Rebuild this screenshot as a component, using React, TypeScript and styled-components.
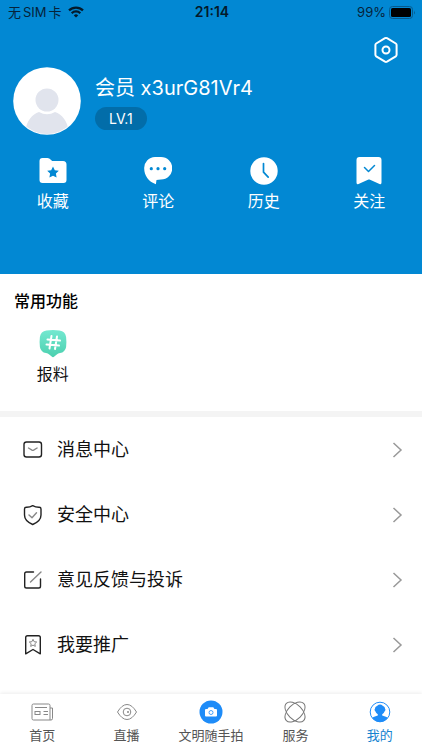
import React from "react";
import styled, { createGlobalStyle } from "styled-components";

const GlobalStyle = createGlobalStyle`
  * { box-sizing: border-box; }
  body { margin: 0; background: #fff; }
  body, button { font-family: Inter, "Noto Sans CJK SC", sans-serif; }
  button { border: 0; padding: 0; margin: 0; background: none; color: inherit; cursor: pointer; }
  svg { display: block; flex: none; }
`;

const Page = styled.div`
  display: flex;
  flex-direction: column;
  min-height: 100vh;
  color: #111;
`;

const Header = styled.header`
  background: #0288d3;
  color: #fff;
  padding-bottom: 61px;
`;

const StatusBar = styled.div`
  display: grid;
  grid-template-columns: 1fr auto 1fr;
  align-items: center;
  height: 24px;
  padding: 0 6px 0 8px;
  color: #06233a;
  font-size: 13px;
  line-height: 24px;
`;

const StatusGroup = styled.div<{ $end?: boolean }>`
  display: flex;
  align-items: center;
  gap: ${(p) => (p.$end ? 3 : 6)}px;
  justify-content: ${(p) => (p.$end ? "flex-end" : "flex-start")};
`;

const Carrier = styled.span`
  display: flex;
  gap: 2px;
`;

const Clock = styled.time`
  color: #041a2b;
  font-size: 14px;
  font-weight: 600;
`;

const Tools = styled.div`
  display: flex;
  justify-content: flex-end;
  height: 43px;
  padding: 12px 22px 0;
`;

const IconButton = styled.button`
  width: 28px;
  height: 28px;
`;

const Profile = styled.section`
  display: flex;
  gap: 14px;
  padding: 0 13px;
`;

const ProfileText = styled.div`
  display: flex;
  flex-direction: column;
  align-items: flex-start;
  gap: 5px;
  padding-top: 7px;
`;

const UserName = styled.h1`
  margin: 0;
  font-size: 20px;
  font-weight: 400;
  line-height: 28px;
`;

const Level = styled.span`
  padding: 0 14px;
  border-radius: 12px;
  background: #026da9;
  font-size: 14px;
  line-height: 23px;
`;

const Shortcuts = styled.nav`
  display: grid;
  grid-template-columns: repeat(4, 1fr);
`;

const HeaderShortcuts = styled(Shortcuts)`
  padding-top: 21px;
`;

const Shortcut = styled.button`
  display: flex;
  flex-direction: column;
  align-items: center;
  gap: 3px;
  font-size: 16px;
  line-height: 24px;
`;

const Common = styled.section`
  padding: 15px 0 25px;
  border-bottom: 6px solid #f4f4f4;
`;

const SectionTitle = styled.h2`
  margin: 0 0 16px 14px;
  font-size: 16px;
  font-weight: 500;
  line-height: 24px;
  color: #000;
`;

const Menu = styled.nav`
  flex: 1;
  padding-bottom: 16px;
`;

const MenuRow = styled.button`
  display: flex;
  align-items: center;
  width: 100%;
  height: 65px;
  padding: 0 18px 0 22px;
  gap: 13px;
  font-size: 18px;
  line-height: 26px;
`;

const MenuLabel = styled.span`
  flex: 1;
  text-align: left;
`;

const TabBar = styled.nav`
  position: sticky;
  bottom: 0;
  display: grid;
  grid-template-columns: repeat(5, 1fr);
  height: 56px;
  background: #fff;
  box-shadow: 0 -1px 4px rgba(0, 0, 0, 0.08);
`;

const Tab = styled.button<{ $active?: boolean }>`
  display: flex;
  flex-direction: column;
  align-items: center;
  gap: 1px;
  padding-top: 6px;
  font-size: 13px;
  line-height: 20px;
  white-space: nowrap;
  color: ${(p) => (p.$active ? "#1683d0" : "#555")};
`;

const WifiIcon = () => (
  <svg width="16" height="12" viewBox="0 0 16 12" fill="none" stroke="#041a2b" strokeWidth="2.2">
    <path d="M1 4.4a10 10 0 0 1 14 0M3.7 7.2a6.2 6.2 0 0 1 8.6 0" />
    <path d="M8 11.6 5.8 9.4a3.1 3.1 0 0 1 4.4 0z" fill="#041a2b" stroke="none" />
  </svg>
);

const BatteryIcon = () => (
  <svg width="27" height="13" viewBox="0 0 27 13">
    <rect x="0.5" y="0.5" width="23" height="12" rx="3" fill="none" stroke="#065a8c" />
    <rect x="2" y="2" width="20" height="9" rx="1.6" fill="#000" />
    <path d="M25 4.5q1.6 2 0 4z" fill="#065a8c" />
  </svg>
);

const SettingsIcon = () => (
  <svg width="28" height="28" viewBox="0 0 28 28" fill="none" stroke="#fff" strokeWidth="2" strokeLinejoin="round">
    <path d="M13 2.2q1-.5 2 0l8.800 5.300q.8.5.8 1.500v9.800q0 1-.8 1.500L15 25.700q-1 .5-2 0l-8.800-5.400q-.8-.5-.8-1.500V9q0-1 .8-1.500z" />
    <circle cx="14" cy="14" r="3.500" />
  </svg>
);

const Avatar = () => (
  <svg width="68" height="68" viewBox="0 0 68 68" role="img" aria-label="头像">
    <defs>
      <clipPath id="avatar"><circle cx="34" cy="34" r="33" /></clipPath>
    </defs>
    <circle cx="34" cy="34" r="33.800" fill="#fff" />
    <g clipPath="url(#avatar)" fill="#e1e4ed">
      <path d="M12 68v-4c2-10 7-17 14-19q8 4.500 16 0c7 2 12 9 14 19v4z" />
      <circle cx="34" cy="33" r="11.500" />
    </g>
  </svg>
);

const FolderIcon = () => (
  <svg width="28" height="30" viewBox="0 0 28 30">
    <path d="M.5 5q0-3 3-3h5q2 0 3 1.500L13.200 5H24q3.500 0 3.500 3.500V24q0 3-3 3h-21q-3 0-3-3z" fill="#fff" />
    <path d="m14 10.500 1.800 3.700 4 .6-2.900 2.800.7 4-3.600-1.900-3.600 1.900.7-4-2.900-2.800 4-.6z" fill="#0288d3" />
  </svg>
);

const CommentIcon = () => (
  <svg width="28" height="30" viewBox="0 0 28 30">
    <path d="M11 1h6a10.500 10.500 0 0 1 0 22.500q-2.500 0-4.500.6l-.6 4.200C4.500 25.500.2 19.500.2 12.500A10.900 10.900 0 0 1 11 1z" fill="#fff" />
    <g fill="#0288d3"><circle cx="7.300" cy="12.700" r="1.600" /><circle cx="14" cy="12.700" r="1.600" /><circle cx="20.700" cy="12.700" r="1.600" /></g>
  </svg>
);

const HistoryIcon = () => (
  <svg width="28" height="30" viewBox="0 0 28 30">
    <circle cx="14" cy="15" r="13.700" fill="#fff" />
    <path d="M13.500 7.500v8.700l4.700 5" fill="none" stroke="#0288d3" strokeWidth="1.700" strokeLinecap="round" strokeLinejoin="round" />
  </svg>
);

const FollowIcon = () => (
  <svg width="28" height="30" viewBox="0 0 28 30">
    <path d="M1.500 4q0-3 3-3h19q3 0 3 3v22.500q0 2.300-2 1.400l-10-4.300q-.5-.2-1 0l-10 4.300q-2 .9-2-1.400z" fill="#fff" />
    <path d="m9.500 11.500 4 4 6-6" fill="none" stroke="#0288d3" strokeWidth="1.500" strokeLinecap="round" strokeLinejoin="round" />
  </svg>
);

const ReportIcon = () => (
  <svg width="28" height="30" viewBox="0 0 28 30">
    <defs>
      <linearGradient id="mint" x1="0" y1="0" x2="0" y2="1">
        <stop stopColor="#74e8d0" /><stop offset="1" stopColor="#4bd0af" />
      </linearGradient>
    </defs>
    <path d="M7.500 1.400Q14 .6 20.500 1.400q5.800.8 6.600 6.600.6 5 0 10-.9 5.200-6.100 6.100-2 .3-3.200 1.400L15.300 27.500q-1.300 1.300-2.600 0L10.200 25.500Q9 24.400 7 24.100 1.800 23.200.9 18q-.6-5 0-10Q1.700 2.200 7.500 1.400z" fill="url(#mint)" />
    <path d="m12.500 7-2 12.500M18 7.500l-2 12.500M8.500 10.600l12.500 1M7.500 15.600l12.500 1" fill="none" stroke="#fff" strokeWidth="2" strokeLinecap="round" />
  </svg>
);

const MessageIcon = () => (
  <svg width="22" height="22" viewBox="0 0 22 22" fill="none" stroke="#222" strokeWidth="1.400" strokeLinecap="round">
    <rect x="2" y="3" width="17.500" height="15" rx="2.500" />
    <path d="m6.500 9 3.500 2.200q.8.400 1.600 0L15.100 9" stroke="#888" />
  </svg>
);

const ShieldIcon = () => (
  <svg width="22" height="22" viewBox="0 0 22 22" fill="none" stroke="#222" strokeWidth="1.400" strokeLinecap="round" strokeLinejoin="round">
    <path d="M10.700 1.700q3 1.700 6.500 1.600 1.800 0 1.800 1.700v6c0 5-3.500 7.500-8.300 9.500C6 18.500 2.500 16 2.500 11V5q0-1.700 1.800-1.700 3.500.1 6.400-1.600z" />
    <path d="m7 11 3 2.700 4.500-5" stroke="#888" />
  </svg>
);

const EditIcon = () => (
  <svg width="22" height="22" viewBox="0 0 22 22" fill="none" stroke="#222" strokeWidth="1.400" strokeLinecap="round">
    <path d="M11.500 3h-7Q2.700 3 2.700 4.800v12.400q0 1.800 1.800 1.800h12.200q1.800 0 1.800-1.800V10" />
    <path d="M8.500 13 19 3" stroke="#888" />
  </svg>
);

const PromoteIcon = () => (
  <svg width="22" height="22" viewBox="0 0 22 22" fill="none" stroke="#222" strokeWidth="1.400" strokeLinejoin="round">
    <path d="M3.700 3.500q0-1.800 1.800-1.800h11q1.800 0 1.800 1.800v16.300L11 15.500l-7.300 4.300z" />
    <path d="m11 5.300 1.100 2.400 2.600.3-1.900 1.800.5 2.600-2.300-1.300-2.300 1.300.5-2.600L7.300 8l2.600-.3z" stroke="#888" strokeWidth="1" />
  </svg>
);

const ChevronIcon = () => (
  <svg width="12" height="18" viewBox="0 0 12 18" fill="none" stroke="#999" strokeWidth="1.500">
    <path d="m1.500 2 7.500 7-7.500 7" />
  </svg>
);

const HomeIcon = () => (
  <svg width="24" height="24" viewBox="0 0 24 24" fill="none" stroke="#888">
    <path d="M20 20H3.500Q2 20 2 18.500v-13Q2 4 3.500 4h15Q20 4 20 5.500V20h1q1.500 0 1.500-1.500V8H20M5 7.500h12M13.500 11.500H18M13.500 14.500H18" />
    <rect x="5" y="11.500" width="5" height="3" />
  </svg>
);

const LiveIcon = () => (
  <svg width="24" height="24" viewBox="0 0 24 24" fill="none" stroke="#888">
    <path d="M2.500 12Q7 4.500 12 4.500T21.500 12Q17 19.500 12 19.500T2.500 12z" />
    <circle cx="12" cy="12" r="3.800" />
    <circle cx="13" cy="12" r="1" fill="#888" stroke="none" />
  </svg>
);

const CameraIcon = () => (
  <svg width="24" height="24" viewBox="0 0 24 24">
    <circle cx="12" cy="12" r="11.500" fill="#1e8cf8" />
    <path d="M8.500 9 9.700 7.300h4.600L15.500 9H17q1 0 1 1v5.500q0 1-1 1H7q-1 0-1-1V10q0-1 1-1z" fill="#fff" />
    <circle cx="12" cy="12.500" r="2" fill="none" stroke="#1e8cf8" strokeWidth=".8" />
  </svg>
);

const ServiceIcon = () => (
  <svg width="24" height="24" viewBox="0 0 24 24" fill="none" stroke="#777">
    <ellipse cx="12" cy="12" rx="12.200" ry="7.200" transform="rotate(45 12 12)" />
    <ellipse cx="12" cy="12" rx="12.200" ry="7.200" transform="rotate(-45 12 12)" />
  </svg>
);

const MineIcon = () => (
  <svg width="24" height="24" viewBox="0 0 24 24">
    <circle cx="12" cy="12" r="9.800" fill="none" stroke="#1e8cf8" />
    <path d="M12 4.500q1.500 0 2.700 1.200 2.500.8 2.400 3.100 1.100 1.200-.4 2.400-.7 1.900-2.500 3.100v1.200l4.300 1.500q.8.300 1.100 1Q16.500 22 12 22T4.400 18q.3-.7 1.100-1l4.300-1.500v-1.200q-1.800-1.200-2.500-3.100-1.500-1.200-.4-2.400-.1-2.300 2.400-3.100Q10.500 4.500 12 4.500z" fill="#1e8cf8" />
  </svg>
);

const shortcuts = [
  { label: "收藏", Icon: FolderIcon },
  { label: "评论", Icon: CommentIcon },
  { label: "历史", Icon: HistoryIcon },
  { label: "关注", Icon: FollowIcon },
];

const menu = [
  { label: "消息中心", Icon: MessageIcon },
  { label: "安全中心", Icon: ShieldIcon },
  { label: "意见反馈与投诉", Icon: EditIcon },
  { label: "我要推广", Icon: PromoteIcon },
];

const tabs = [
  { label: "首页", Icon: HomeIcon },
  { label: "直播", Icon: LiveIcon },
  { label: "文明随手拍", Icon: CameraIcon },
  { label: "服务", Icon: ServiceIcon },
  { label: "我的", Icon: MineIcon, active: true },
];

export default function App() {
  return (
    <Page lang="zh-CN">
      <GlobalStyle />
      <Header>
        <StatusBar>
          <StatusGroup>
            <Carrier><span>无</span><span>SIM</span><span>卡</span></Carrier>
            <WifiIcon />
          </StatusGroup>
          <Clock>21:14</Clock>
          <StatusGroup $end>
            <span>99%</span>
            <BatteryIcon />
          </StatusGroup>
        </StatusBar>
        <Tools>
          <IconButton aria-label="设置"><SettingsIcon /></IconButton>
        </Tools>
        <Profile>
          <Avatar />
          <ProfileText>
            <UserName>会员 x3urG81Vr4</UserName>
            <Level>LV.1</Level>
          </ProfileText>
        </Profile>
        <HeaderShortcuts>
          {shortcuts.map(({ label, Icon }) => (
            <Shortcut key={label}><Icon />{label}</Shortcut>
          ))}
        </HeaderShortcuts>
      </Header>
      <Common>
        <SectionTitle>常用功能</SectionTitle>
        <Shortcuts>
          <Shortcut><ReportIcon />报料</Shortcut>
        </Shortcuts>
      </Common>
      <Menu>
        {menu.map(({ label, Icon }) => (
          <MenuRow key={label}>
            <Icon />
            <MenuLabel>{label}</MenuLabel>
            <ChevronIcon />
          </MenuRow>
        ))}
      </Menu>
      <TabBar>
        {tabs.map(({ label, Icon, active }) => (
          <Tab key={label} $active={active} aria-current={active ? "page" : undefined}>
            <Icon />
            {label}
          </Tab>
        ))}
      </TabBar>
    </Page>
  );
}
